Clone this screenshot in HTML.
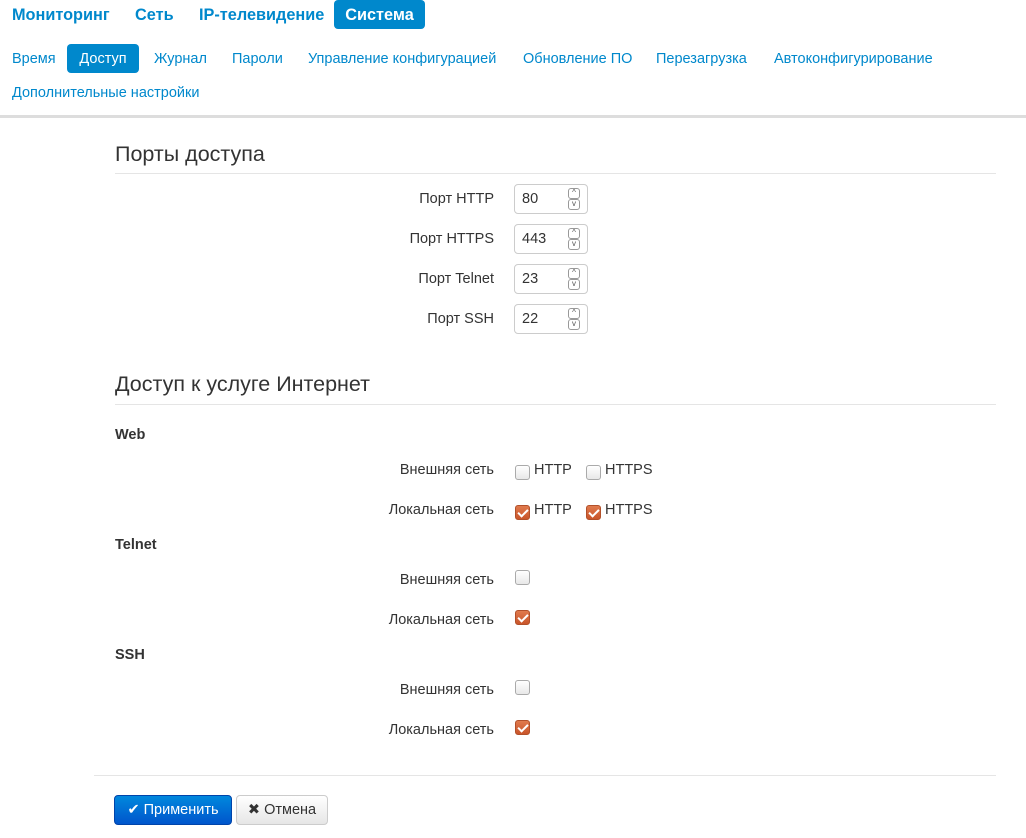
<!DOCTYPE html>
<html><head><meta charset="utf-8"><style>
*{box-sizing:border-box;margin:0;padding:0}
body{width:1026px;height:838px;background:#fff;font-family:"Liberation Sans",sans-serif;position:relative;overflow:hidden;color:#333}
.a{position:absolute;white-space:nowrap}
.t{font-size:16.3px;font-weight:bold;color:#0088cc;top:6px}
.s{font-size:14.5px;color:#0088cc}
.pill{background:#0088cc;color:#fff !important;border-radius:4px}
h2{position:absolute;font-weight:normal;font-size:21.5px;color:#333}
.hr{position:absolute;height:1px;background:#e5e5e5}
.lbl{position:absolute;right:532px;font-size:14.5px;color:#333}
.inp{position:absolute;left:514px;width:74px;height:30px;border:1px solid #ccc;border-radius:4px;font-size:14.5px;padding:6px 0 0 7px}
.sp{position:absolute;right:7px;width:12px;height:11px;border:1px solid #999;border-radius:3px;font-size:8px;line-height:8px;text-align:center;color:#555}
.b{position:absolute;left:115px;font-size:14.5px;font-weight:bold;color:#333}
.cb{position:absolute;width:15px;height:15px;border:1px solid #aaa;border-radius:3px;background:linear-gradient(#fff,#e8e8e8)}
.cb.on{border-color:#b2502a;background:linear-gradient(#e07a4d,#c9552a)}
.cb.on:after{content:"";position:absolute;left:4px;top:1px;width:4px;height:8px;border:solid #fff;border-width:0 2px 2px 0;transform:rotate(45deg)}
.ct{position:absolute;font-size:14.5px;color:#333}
</style></head><body>
<div class="a t" style="left:12px">Мониторинг</div>
<div class="a t" style="left:135px">Сеть</div>
<div class="a t" style="left:199px">IP-телевидение</div>
<div class="a t pill" style="left:334px;top:0;width:91px;height:29px;padding-top:6px;text-align:center">Система</div>

<div class="a s" style="left:12px;top:51px">Время</div>
<div class="a s pill" style="left:67px;top:44px;width:72px;height:29px;padding-top:7px;text-align:center">Доступ</div>
<div class="a s" style="left:154px;top:51px">Журнал</div>
<div class="a s" style="left:232px;top:51px">Пароли</div>
<div class="a s" style="left:308px;top:51px">Управление конфигурацией</div>
<div class="a s" style="left:523px;top:51px">Обновление ПО</div>
<div class="a s" style="left:656px;top:51px">Перезагрузка</div>
<div class="a s" style="left:774px;top:51px">Автоконфигурирование</div>
<div class="a s" style="left:12px;top:85px">Дополнительные настройки</div>
<div class="a" style="left:0;top:115px;width:1026px;height:3px;background:#ddd"></div>

<h2 style="left:115px;top:142px">Порты доступа</h2>
<div class="hr" style="left:115px;top:173px;width:881px"></div>

<div class="lbl" style="top:191px">Порт HTTP</div>
<div class="inp" style="top:184px">80<div class="sp" style="top:3px">^</div><div class="sp" style="top:14px">v</div></div>
<div class="lbl" style="top:231px">Порт HTTPS</div>
<div class="inp" style="top:224px">443<div class="sp" style="top:3px">^</div><div class="sp" style="top:14px">v</div></div>
<div class="lbl" style="top:271px">Порт Telnet</div>
<div class="inp" style="top:264px">23<div class="sp" style="top:3px">^</div><div class="sp" style="top:14px">v</div></div>
<div class="lbl" style="top:311px">Порт SSH</div>
<div class="inp" style="top:304px">22<div class="sp" style="top:3px">^</div><div class="sp" style="top:14px">v</div></div>

<h2 style="left:115px;top:372px">Доступ к услуге Интернет</h2>
<div class="hr" style="left:115px;top:404px;width:881px"></div>

<div class="b" style="top:427px">Web</div>
<div class="lbl" style="top:462px">Внешняя сеть</div>
<div class="cb" style="left:515px;top:465px"></div><div class="ct" style="left:534px;top:462px">HTTP</div>
<div class="cb" style="left:586px;top:465px"></div><div class="ct" style="left:605px;top:462px">HTTPS</div>
<div class="lbl" style="top:502px">Локальная сеть</div>
<div class="cb on" style="left:515px;top:505px"></div><div class="ct" style="left:534px;top:502px">HTTP</div>
<div class="cb on" style="left:586px;top:505px"></div><div class="ct" style="left:605px;top:502px">HTTPS</div>

<div class="b" style="top:537px">Telnet</div>
<div class="lbl" style="top:572px">Внешняя сеть</div>
<div class="cb" style="left:515px;top:570px"></div>
<div class="lbl" style="top:612px">Локальная сеть</div>
<div class="cb on" style="left:515px;top:610px"></div>

<div class="b" style="top:647px">SSH</div>
<div class="lbl" style="top:682px">Внешняя сеть</div>
<div class="cb" style="left:515px;top:680px"></div>
<div class="lbl" style="top:722px">Локальная сеть</div>
<div class="cb on" style="left:515px;top:720px"></div>

<div class="hr" style="left:94px;top:775px;width:902px"></div>
<div class="a" style="left:114px;top:795px;width:118px;height:30px;border-radius:4px;border:1px solid #0044aa;background:linear-gradient(#0088dd,#0055cc);color:#fff;font-size:14.5px;padding-top:6px;text-align:center">✔ Применить</div>
<div class="a" style="left:236px;top:795px;width:92px;height:30px;border-radius:4px;border:1px solid #ccc;background:linear-gradient(#fff,#e6e6e6);color:#333;font-size:14.5px;padding-top:6px;text-align:center">✖ Отмена</div>
</body></html>
